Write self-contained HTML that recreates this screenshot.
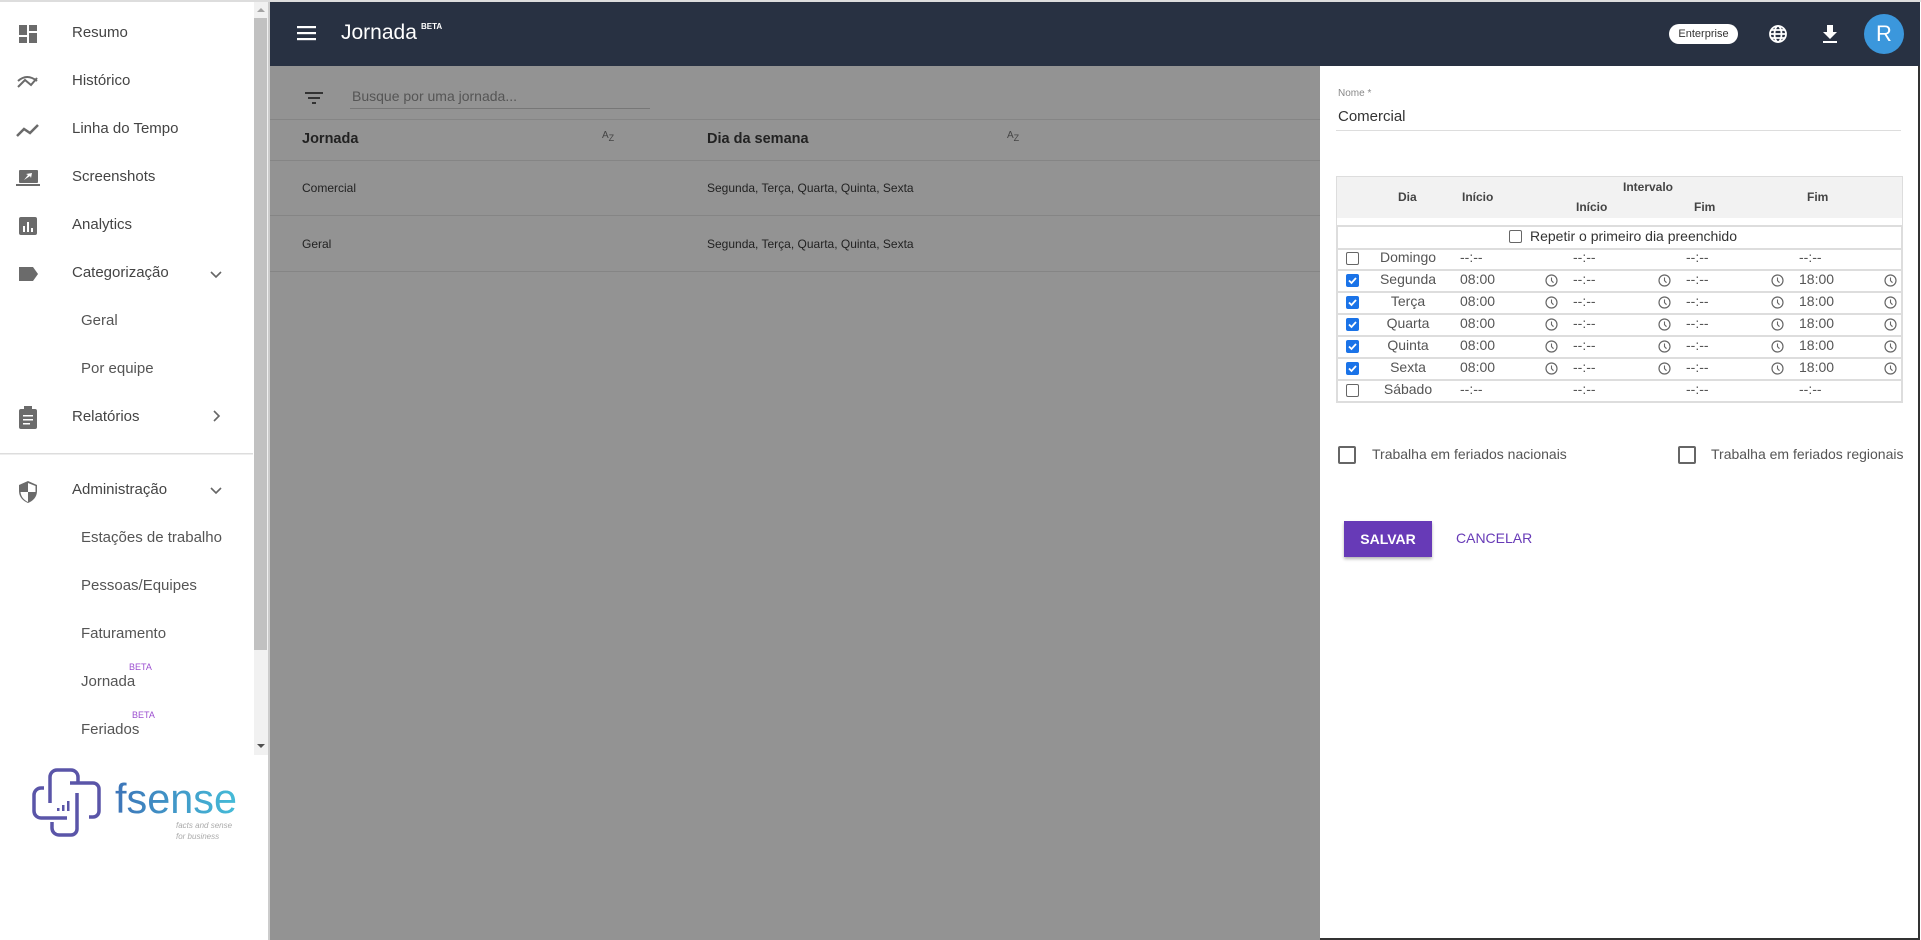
<!DOCTYPE html>
<html><head><meta charset="utf-8"><style>
*{box-sizing:border-box;margin:0;padding:0}
body{width:1921px;height:940px;position:relative;overflow:hidden;font-family:"Liberation Sans",Arial,sans-serif;background:#fff;color:#333}
.a{position:absolute;white-space:nowrap}
.side{left:0;top:2px;width:254px;height:938px;background:#fff}
.it{font-size:15px;color:#444;line-height:18px}
.sub{font-size:15px;color:#555}
.ic{fill:#6b6b6b}
.hdr{left:270px;top:2px;width:1650px;height:64px;background:#283142}
.ov{left:270px;top:66px;width:1050px;height:874px;background:#939393}
.panel{left:1320px;top:66px;width:600px;height:874px;background:#fff;border-right:2px solid #333;border-bottom:2px solid #333}
.t{font-size:14px;color:#555}
.tb{font-size:12px;color:#444;font-weight:bold}
.row{left:1336px;width:567px;height:22px;border:2px solid #ddd;border-top:none}
.cb{width:13px;height:13px;border:1.5px solid #666;border-radius:2px;background:#fff}
.cbc{width:13px;height:13px;border-radius:2px;background:#1a73e8}
</style></head><body>
<div class="a" style="left:0;top:0;width:1921px;height:2px;background:#ddd"></div>
<div class="a side"></div>
<div class="a" style="left:254px;top:2px;width:15px;height:753px;background:#f1f1f1"></div>
<div class="a" style="left:254px;top:18px;width:13px;height:632px;background:#c1c1c1"></div>
<div class="a" style="left:257px;top:8px;width:0;height:0;border-left:4px solid transparent;border-right:4px solid transparent;border-bottom:4px solid #a3a3a3"></div>
<div class="a" style="left:257px;top:744px;width:0;height:0;border-left:4px solid transparent;border-right:4px solid transparent;border-top:4px solid #505050"></div>
<div class="a" style="left:268px;top:2px;width:2px;height:938px;background:#ccc"></div>

<svg class="a" style="left:0;top:0" width="254" height="760">
<g class="ic">
<rect x="19" y="25" width="8" height="10"/><rect x="29" y="25" width="8" height="6"/><rect x="19" y="37" width="8" height="6"/><rect x="29" y="33" width="8" height="10"/>
<path d="M18 87 L25 80 L31 85 L37 78" stroke="#6b6b6b" stroke-width="2" fill="none"/><path d="M18 81 Q27 73 37 81" stroke="#6b6b6b" stroke-width="2" fill="none"/>
<path d="M17 136 L24 129 L30 133 L38 125" stroke="#6b6b6b" stroke-width="2.5" fill="none"/>
<rect x="19" y="170" width="19" height="13" rx="1"/><rect x="16" y="184" width="24" height="2"/>
<path d="M24 180 L28 175 L26 174 L32 173 L31 178 L30 176 Z" fill="#fff"/>
<rect x="19" y="217" width="18" height="18" rx="2"/><rect x="23" y="226" width="2" height="6" fill="#fff"/><rect x="27" y="222" width="2" height="10" fill="#fff"/><rect x="31" y="228" width="2" height="4" fill="#fff"/>
<path d="M19 267 h14 l5 7 l-5 7 h-14 z"/>
<rect x="19" y="409" width="18" height="20" rx="2"/><rect x="24" y="406" width="8" height="4"/><rect x="23" y="415" width="10" height="1.5" fill="#fff"/><rect x="23" y="419" width="10" height="1.5" fill="#fff"/><rect x="23" y="423" width="7" height="1.5" fill="#fff"/>
<path d="M28 481 l9 4 v6 c0 6 -4 10 -9 12 c-5 -2 -9 -6 -9 -12 v-6 z"/><path d="M28 483 v9 h7.5 v-1 v-5 z M28 492 h-7.5 c0.5 5 3.5 8 7.5 10 z" fill="#fff"/>
</g>
<path d="M211 272 l5 5 l5 -5" stroke="#666" stroke-width="1.6" fill="none"/>
<path d="M214 411 l5 5 l-5 5" stroke="#666" stroke-width="1.6" fill="none"/>
<path d="M211 488 l5 5 l5 -5" stroke="#666" stroke-width="1.6" fill="none"/>
<rect x="0" y="453" width="253" height="1.5" fill="#ddd"/>
</svg>
<div class="a it" style="left:72px;top:24px">Resumo</div>
<div class="a it" style="left:72px;top:72px">Histórico</div>
<div class="a it" style="left:72px;top:120px">Linha do Tempo</div>
<div class="a it" style="left:72px;top:168px">Screenshots</div>
<div class="a it" style="left:72px;top:216px">Analytics</div>
<div class="a it" style="left:72px;top:264px">Categorização</div>
<div class="a sub" style="left:81px;top:312px">Geral</div>
<div class="a sub" style="left:81px;top:360px">Por equipe</div>
<div class="a it" style="left:72px;top:408px">Relatórios</div>
<div class="a it" style="left:72px;top:481px">Administração</div>
<div class="a sub" style="left:81px;top:529px">Estações de trabalho</div>
<div class="a sub" style="left:81px;top:577px">Pessoas/Equipes</div>
<div class="a sub" style="left:81px;top:625px">Faturamento</div>
<div class="a sub" style="left:81px;top:673px">Jornada</div>
<div class="a" style="left:129px;top:662px;font-size:9px;color:#9c4fd0">BETA</div>
<div class="a sub" style="left:81px;top:721px">Feriados</div>
<div class="a" style="left:132px;top:710px;font-size:9px;color:#9c4fd0">BETA</div>
<svg class="a" style="left:30px;top:765px" width="220" height="80">
<defs><linearGradient id="g" x1="0" x2="1"><stop offset="0" stop-color="#3d74b8"/><stop offset="1" stop-color="#45bcd8"/></linearGradient></defs>
<g fill="none" stroke="#5a55a8" stroke-width="3.5">
<path d="M14 23 h-3 a7 7 0 0 0 -7 7 v16 a7 7 0 0 0 7 7 h26"/>
<path d="M20 38 v-26 a7 7 0 0 1 7 -7 h14 a7 7 0 0 1 7 7 v6"/>
<path d="M40 18 h23 a6 6 0 0 1 6 6 v22 a6 6 0 0 1 -6 6 h-4"/>
<path d="M47 28 v36 a6 6 0 0 1 -6 6 h-12 a7 7 0 0 1 -7 -7 v-6"/>
</g>
<g fill="#5a55a8"><rect x="27" y="43" width="2.5" height="3"/><rect x="32" y="40" width="2.5" height="6"/><rect x="37" y="36" width="2.5" height="10"/></g>
<text x="85" y="48" font-family="Liberation Sans" font-size="42" fill="url(#g)" textLength="122" lengthAdjust="spacingAndGlyphs">fsense</text>
<text x="146" y="63" font-family="Liberation Sans" font-size="8" font-style="italic" fill="#aaa">facts and sense</text>
<text x="146" y="74" font-family="Liberation Sans" font-size="8" font-style="italic" fill="#aaa">for business</text>
</svg>

<div class="a hdr"></div>
<svg class="a" style="left:297px;top:26px" width="20" height="16"><rect y="0" width="19" height="2.2" fill="#fff"/><rect y="6" width="19" height="2.2" fill="#fff"/><rect y="12" width="19" height="2.2" fill="#fff"/></svg>
<div class="a" style="left:341px;top:21px;font-size:21px;color:#fff">Jornada</div>
<div class="a" style="left:421px;top:22px;font-size:8px;color:#fff;font-weight:bold">BETA</div>
<div class="a" style="left:1669px;top:24px;width:69px;height:20px;border-radius:10px;background:#fff;font-size:11px;color:#333;text-align:center;line-height:20px">Enterprise</div>
<svg class="a" style="left:1768px;top:24px" width="20" height="20"><g fill="none" stroke="#fff" stroke-width="1.8"><circle cx="10" cy="10" r="8"/><ellipse cx="10" cy="10" rx="3.5" ry="8"/><path d="M2 10h16M3.5 6h13M3.5 14h13"/></g></svg>
<svg class="a" style="left:1822px;top:24px" width="16" height="20"><path d="M5 1h6v7h4l-7 7l-7 -7h4z" fill="#fff"/><rect x="1" y="17" width="14" height="2" fill="#fff"/></svg>
<div class="a" style="left:1864px;top:14px;width:40px;height:40px;border-radius:50%;background:#3b97dc;color:#fff;font-size:22px;text-align:center;line-height:40px">R</div>

<div class="a ov"></div>
<svg class="a" style="left:305px;top:90px" width="20" height="16"><g fill="#333"><rect x="0" y="2" width="18" height="2"/><rect x="3" y="7" width="12" height="2"/><rect x="7" y="12" width="4" height="2"/></g></svg>
<div class="a" style="left:352px;top:88px;font-size:14px;color:#555">Busque por uma jornada...</div>
<div class="a" style="left:350px;top:108px;width:300px;height:1px;background:#777"></div>
<div class="a" style="left:270px;top:119px;width:1050px;height:1px;background:#858585"></div>
<div class="a" style="left:302px;top:131px;font-size:14.5px;font-weight:bold;color:#222">Jornada</div>
<div class="a" style="left:602px;top:130px;font-size:10px;color:#444">A<sub style="font-size:9px">Z</sub></div>
<div class="a" style="left:707px;top:131px;font-size:14.5px;font-weight:bold;color:#222">Dia da semana</div>
<div class="a" style="left:1007px;top:130px;font-size:10px;color:#444">A<sub style="font-size:9px">Z</sub></div>
<div class="a" style="left:270px;top:160px;width:1050px;height:1px;background:#858585"></div>
<div class="a" style="left:302px;top:181px;font-size:12px;color:#222">Comercial</div>
<div class="a" style="left:707px;top:181px;font-size:12px;color:#222">Segunda, Terça, Quarta, Quinta, Sexta</div>
<div class="a" style="left:270px;top:215px;width:1050px;height:1px;background:#858585"></div>
<div class="a" style="left:302px;top:237px;font-size:12px;color:#222">Geral</div>
<div class="a" style="left:707px;top:237px;font-size:12px;color:#222">Segunda, Terça, Quarta, Quinta, Sexta</div>
<div class="a" style="left:270px;top:271px;width:1050px;height:1px;background:#858585"></div>

<div class="a panel"></div>
<div class="a" style="left:1338px;top:88px;font-size:10px;color:#888">Nome *</div>
<div class="a" style="left:1338px;top:108px;font-size:15px;color:#333">Comercial</div>
<div class="a" style="left:1336px;top:130px;width:565px;height:1px;background:#ddd"></div>

<div class="a" style="left:1336px;top:176px;width:567px;height:42px;background:#f2f2f2;border:1px solid #ddd;border-bottom:none"></div>
<div class="a tb" style="left:1398px;top:190px">Dia</div>
<div class="a tb" style="left:1462px;top:190px">Início</div>
<div class="a tb" style="left:1623px;top:180px">Intervalo</div>
<div class="a tb" style="left:1576px;top:200px">Início</div>
<div class="a tb" style="left:1694px;top:200px">Fim</div>
<div class="a tb" style="left:1807px;top:190px">Fim</div>
<div class="a" style="left:1336px;top:218px;width:567px;height:9px;border:1px solid #ddd;border-top:none;border-bottom:2px solid #ddd"></div>
<div class="a" style="left:1336px;top:226px;width:567px;height:24px;border:2px solid #ddd;border-top:none"></div>
<div class="a cb" style="left:1509px;top:230px"></div>
<div class="a" style="left:1530px;top:228px;font-size:14px;color:#333">Repetir o primeiro dia preenchido</div>

<div id="rows"></div>
<script>
var days=[["Domingo",0],["Segunda",1],["Terça",1],["Quarta",1],["Quinta",1],["Sexta",1],["Sábado",0]];
var h="";
var clock='<svg width="13" height="13"><circle cx="6.5" cy="6.5" r="5.5" fill="none" stroke="#666" stroke-width="1.2"/><path d="M6.5 3.5v3.2l2 2" fill="none" stroke="#666" stroke-width="1.1"/></svg>';
days.forEach(function(d,i){
 var y=249+i*22;
 h+='<div class="a row" style="top:'+y+'px"></div>';
 h+='<div class="a '+(d[1]?'cbc':'cb')+'" style="left:1346px;top:'+(y+3)+'px">'+(d[1]?'<svg width="13" height="13" style="display:block"><path d="M3 6.5l2.5 2.5l4.5 -5" stroke="#fff" stroke-width="1.8" fill="none"/></svg>':'')+'</div>';
 h+='<div class="a t" style="left:1368px;width:80px;text-align:center;top:'+(y)+'px">'+d[0]+'</div>';
 var vals=d[1]?["08:00","--:--","--:--","18:00"]:["--:--","--:--","--:--","--:--"];
 var xs=[1460,1573,1686,1799],cx=[1545,1658,1771,1884];
 for(var k=0;k<4;k++){
  h+='<div class="a t" style="left:'+xs[k]+'px;top:'+(y)+'px">'+vals[k]+'</div>';
  if(d[1]) h+='<div class="a" style="left:'+cx[k]+'px;top:'+(y+3)+'px">'+clock+'</div>';
 }
});
document.getElementById("rows").outerHTML=h;
</script>

<div class="a" style="left:1338px;top:446px;width:18px;height:18px;border:2px solid #666;border-radius:2px"></div>
<div class="a t" style="left:1372px;top:446px">Trabalha em feriados nacionais</div>
<div class="a" style="left:1678px;top:446px;width:18px;height:18px;border:2px solid #666;border-radius:2px"></div>
<div class="a t" style="left:1711px;top:446px">Trabalha em feriados regionais</div>

<div class="a" style="left:1344px;top:521px;width:88px;height:36px;background:#673ab7;color:#fff;font-size:14px;font-weight:bold;text-align:center;line-height:36px;box-shadow:0 2px 3px rgba(0,0,0,.3)">SALVAR</div>
<div class="a" style="left:1456px;top:530px;font-size:14px;color:#673ab7">CANCELAR</div>
</body></html>
